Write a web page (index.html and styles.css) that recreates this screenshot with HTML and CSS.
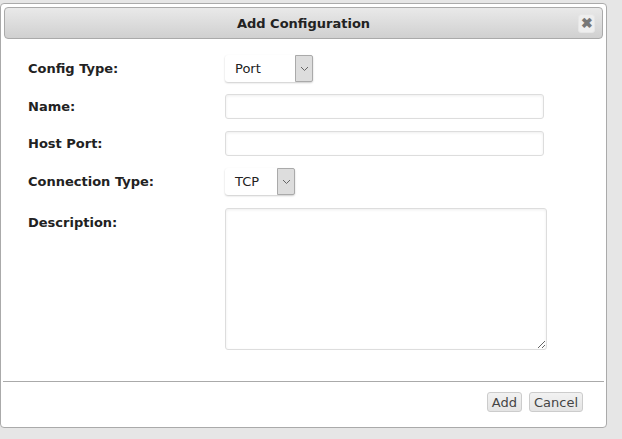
FILE: index.html
```html
<!DOCTYPE html>
<html lang="en">
<head>
    <meta charset="UTF-8">
    <title>Add Configuration</title>
    <link rel="stylesheet" href="styles.css">
</head>
<body>

    <div class="dialog">
        <div class="titlebar">
            <span class="title">Add Configuration</span>
            <button class="close-btn" title="Close">&#10006;</button>
        </div>

        <form class="config-form">
            <label class="lbl">Config Type:</label>
            <div class="select-box wide">
                <span>Port</span>
                <span class="arrow"><svg width="9" height="6" viewBox="0 0 9 6"><path d="M1 1 L4.5 4.5 L8 1" fill="none" stroke="#666" stroke-width="1"/></svg></span>
            </div>

            <label class="lbl">Name:</label>
            <input type="text" class="input-field">

            <label class="lbl">Host Port:</label>
            <input type="text" class="input-field">

            <label class="lbl">Connection Type:</label>
            <div class="select-box narrow">
                <span>TCP</span>
                <span class="arrow"><svg width="9" height="6" viewBox="0 0 9 6"><path d="M1 1 L4.5 4.5 L8 1" fill="none" stroke="#666" stroke-width="1"/></svg></span>
            </div>

            <label class="lbl top">Description:</label>
            <textarea class="text-area"></textarea>
        </form>

        <div class="buttonpane">
            <button class="btn">Add</button>
            <button class="btn">Cancel</button>
        </div>
    </div>

</body>
</html>
```

FILE: styles.css
```css
body {
    margin: 0;
    background: #e6e6e6;
    font-family: 'DejaVu Sans', Verdana, sans-serif;
    font-size: 13px;
    color: #222;
}
.dialog {
    margin-top: 3px;
    width: 607px;
    height: 425px;
    box-sizing: border-box;
    background: #fff;
    border: 1px solid #aaa;
    border-radius: 4px;
    padding: 3px;
    display: flex;
    flex-direction: column;
}
.titlebar {
    height: 32px;
    box-sizing: border-box;
    border: 1px solid #aaa;
    border-radius: 4px;
    background: linear-gradient(to bottom, #e9e9e9, #d0d0d0);
    display: flex;
    align-items: center;
    justify-content: center;
    position: relative;
}
.title {
    font-weight: bold;
    font-size: 13px;
    color: #222;
}
.close-btn {
    position: absolute;
    right: 7px;
    top: 6px;
    width: 17px;
    height: 19px;
    padding: 0;
    border: 1px solid #e6e6e6;
    border-radius: 3px;
    background: #eee;
    color: #777;
    font-size: 14px;
    font-weight: bold;
    line-height: 17px;
}
.config-form {
    display: grid;
    grid-template-columns: 197px auto;
    align-items: center;
    row-gap: 12px;
    padding: 16px 0 0 24px;
}
.lbl {
    font-weight: bold;
    font-size: 13px;
}
.lbl.top {
    align-self: start;
    padding-top: 8px;
}
.select-box {
    height: 27px;
    box-sizing: border-box;
    display: flex;
    align-items: stretch;
    border-radius: 3px;
    background: #fff;
    box-shadow: 0 1px 2px #ccc;
}
.select-box span:first-child {
    flex: 1;
    padding-left: 10px;
    line-height: 27px;
}
.select-box.wide { width: 88px; }
.select-box.narrow { width: 70px; }
.arrow {
    width: 16px;
    background: #ddd;
    border: 1px solid #aaa;
    border-radius: 0 2px 2px 0;
    display: flex;
    align-items: center;
    justify-content: center;
}
.input-field {
    width: 319px;
    height: 25px;
    box-sizing: border-box;
    border: 1px solid #ddd;
    border-radius: 3px;
    box-shadow: inset 0 1px 3px #eee;
    margin: 0;
}
.text-area {
    width: 322px;
    height: 142px;
    box-sizing: border-box;
    border: 1px solid #ddd;
    border-radius: 3px;
    box-shadow: inset 0 1px 3px #eee;
    margin: 1px 0 0;
}
.buttonpane {
    margin-top: auto;
    border-top: 1px solid #aaa;
    margin-left: -1px;
    margin-right: -1px;
    display: flex;
    justify-content: flex-end;
    gap: 7px;
    padding: 10px 21px 12px 0;
}
.btn {
    font-family: 'DejaVu Sans', Verdana, sans-serif;
    font-size: 13px;
    color: #444;
    background: linear-gradient(to bottom, #f2f2f2, #e4e4e4);
    border: 1px solid #ccc;
    border-radius: 3px;
    padding: 1px 4px;
    height: 20px;
}
```
